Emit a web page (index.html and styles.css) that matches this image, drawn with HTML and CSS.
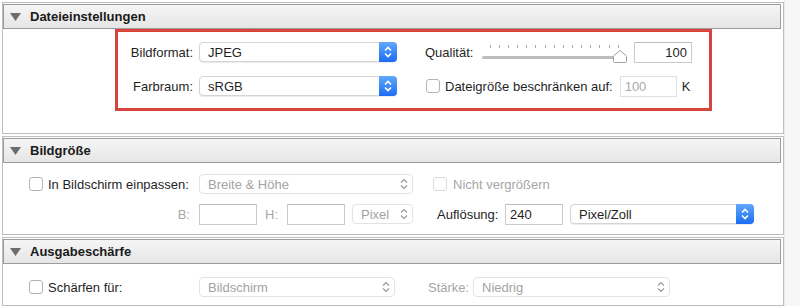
FILE: index.html
```html
<!DOCTYPE html>
<html lang="de">
<head>
<meta charset="utf-8">
<title>Export</title>
<link rel="stylesheet" href="styles.css">
</head>
<body>
<div class="panel">
  <section class="sec sec1">
    <div class="hdr"><svg class="tri" width="11" height="8" viewBox="0 0 11 8"><polygon points="0,0 11,0 5.5,8" fill="#6d6d6d"/></svg><span>Dateieinstellungen</span></div>
    <div class="body b1">
      <div class="row">
        <span class="lbl w93">Bildformat:</span>
        <div class="popup on w198"><span>JPEG</span><span class="step blue"><svg width="18" height="18" viewBox="0 0 18 18"><polyline points="6,7.5 9,4.5 12,7.5" fill="none" stroke="#fff" stroke-width="1.6"/><polyline points="6,10.5 9,13.5 12,10.5" fill="none" stroke="#fff" stroke-width="1.6"/></svg></span></div>
        <span class="txt ml28 w57">Qualität:</span>
        <svg class="slider" width="146" height="22" viewBox="0 0 146 22">
          <g stroke="#a6a6a6" stroke-width="1">
            <line x1="8.5" y1="4" x2="8.5" y2="7"/><line x1="17.5" y1="4" x2="17.5" y2="7"/><line x1="26.5" y1="4" x2="26.5" y2="7"/><line x1="35.5" y1="4" x2="35.5" y2="7"/><line x1="44.5" y1="4" x2="44.5" y2="7"/><line x1="53.5" y1="4" x2="53.5" y2="7"/><line x1="63.5" y1="4" x2="63.5" y2="7"/><line x1="72.5" y1="4" x2="72.5" y2="7"/><line x1="81.5" y1="4" x2="81.5" y2="7"/><line x1="90.5" y1="4" x2="90.5" y2="7"/><line x1="99.5" y1="4" x2="99.5" y2="7"/><line x1="108.5" y1="4" x2="108.5" y2="7"/><line x1="117.5" y1="4" x2="117.5" y2="7"/><line x1="127.5" y1="4" x2="127.5" y2="7"/><line x1="136.5" y1="4" x2="136.5" y2="7"/>
          </g>
          <rect x="0" y="15" width="142" height="3" rx="1.5" fill="#bdbdbd"/>
          <path d="M138 9.5 L144.5 15 V20.5 Q144.5 21.5 143.5 21.5 H132.5 Q131.5 21.5 131.5 20.5 V15 Z" fill="#fff" stroke="#a0a0a0" stroke-width="1"/>
        </svg>
        <div class="field w58 ml6 right">100</div>
      </div>
      <div class="row">
        <span class="lbl w93">Farbraum:</span>
        <div class="popup on w198"><span>sRGB</span><span class="step blue"><svg width="18" height="18" viewBox="0 0 18 18"><polyline points="6,7.5 9,4.5 12,7.5" fill="none" stroke="#fff" stroke-width="1.6"/><polyline points="6,10.5 9,13.5 12,10.5" fill="none" stroke="#fff" stroke-width="1.6"/></svg></span></div>
        <span class="cb ml29"></span>
        <span class="txt ml5">Dateigröße beschränken auf:</span>
        <div class="field off w57 ml7">100</div>
        <span class="txt ml5">K</span>
      </div>
    </div>
    <div class="redbox"></div>
  </section>

  <section class="sec">
    <div class="hdr"><svg class="tri" width="11" height="8" viewBox="0 0 11 8"><polygon points="0,0 11,0 5.5,8" fill="#6d6d6d"/></svg><span>Bildgröße</span></div>
    <div class="body b2">
      <div class="row pl26">
        <div class="cbgroup w170"><span class="cb"></span><span class="txt ml5">In Bildschirm einpassen:</span></div>
        <div class="popup off w214"><span>Breite &amp; Höhe</span><span class="step"><svg width="18" height="18" viewBox="0 0 18 18"><polyline points="6,7.5 9,4.5 12,7.5" fill="none" stroke="#9a9a9a" stroke-width="1.2"/><polyline points="6,10.5 9,13.5 12,10.5" fill="none" stroke="#9a9a9a" stroke-width="1.2"/></svg></span></div>
        <span class="cb dis ml20"></span>
        <span class="txt dim ml6">Nicht vergrößern</span>
      </div>
      <div class="row pl167">
        <span class="lbl dim w20">B:</span>
        <div class="field w58 ml9"></div>
        <span class="txt dim w22 ml8">H:</span>
        <div class="field w58"></div>
        <div class="popup off w61 ml7"><span>Pixel</span><span class="step"><svg width="18" height="18" viewBox="0 0 18 18"><polyline points="6,7.5 9,4.5 12,7.5" fill="none" stroke="#9a9a9a" stroke-width="1.2"/><polyline points="6,10.5 9,13.5 12,10.5" fill="none" stroke="#9a9a9a" stroke-width="1.2"/></svg></span></div>
        <span class="txt w68 ml24">Auflösung:</span>
        <div class="field w58 left">240</div>
        <div class="popup on w184 ml7"><span>Pixel/Zoll</span><span class="step blue"><svg width="18" height="18" viewBox="0 0 18 18"><polyline points="6,7.5 9,4.5 12,7.5" fill="none" stroke="#fff" stroke-width="1.6"/><polyline points="6,10.5 9,13.5 12,10.5" fill="none" stroke="#fff" stroke-width="1.6"/></svg></span></div>
      </div>
    </div>
  </section>

  <section class="sec">
    <div class="hdr"><svg class="tri" width="11" height="8" viewBox="0 0 11 8"><polygon points="0,0 11,0 5.5,8" fill="#6d6d6d"/></svg><span>Ausgabeschärfe</span></div>
    <div class="body b3">
      <div class="row pl26">
        <div class="cbgroup w170"><span class="cb"></span><span class="txt ml5">Schärfen für:</span></div>
        <div class="popup off w196"><span>Bildschirm</span><span class="step"><svg width="18" height="18" viewBox="0 0 18 18"><polyline points="6,7.5 9,4.5 12,7.5" fill="none" stroke="#9a9a9a" stroke-width="1.2"/><polyline points="6,10.5 9,13.5 12,10.5" fill="none" stroke="#9a9a9a" stroke-width="1.2"/></svg></span></div>
        <span class="txt dim w45 ml33">Stärke:</span>
        <div class="popup off w197"><span>Niedrig</span><span class="step"><svg width="18" height="18" viewBox="0 0 18 18"><polyline points="6,7.5 9,4.5 12,7.5" fill="none" stroke="#9a9a9a" stroke-width="1.2"/><polyline points="6,10.5 9,13.5 12,10.5" fill="none" stroke="#9a9a9a" stroke-width="1.2"/></svg></span></div>
      </div>
    </div>
  </section>
</div>
<div class="scroll"></div>
</body>
</html>
```

FILE: styles.css
```css
* { box-sizing: border-box; }
html, body { margin: 0; padding: 0; }
body {
  width: 800px;
  height: 306px;
  overflow: hidden;
  display: flex;
  background: #fff;
  font-family: "Liberation Sans", Arial, sans-serif;
  font-size: 13px;
  color: #1f1f1f;
}
.panel {
  width: 784px;
  padding: 2px 0 0 2px;
}
.scroll {
  width: 16px;
  background: #f7f7f7;
  border-left: 1px solid #e9e9e9;
}
.sec {
  position: relative;
  width: 782px;
  border: 1px solid #bdbdbd;
  padding-top: 1px;
  margin-bottom: 2px;
  background: #fff;
}
.hdr {
  height: 25px;
  margin-right: 2px;
  border: 1px solid #9c9c9c;
  background: linear-gradient(#f5f5f5, #e6e6e6);
  display: flex;
  align-items: center;
  font-weight: bold;
  color: #1a1a1a;
}
.tri { margin-left: 6px; margin-right: 9px; }
.b1 { height: 104px; padding-top: 12px; display: flex; flex-direction: column; gap: 12px; }
.b2 { height: 71px; padding-top: 10px; display: flex; flex-direction: column; gap: 8px; }
.b3 { height: 41px; padding-top: 12px; }
.row { display: flex; align-items: center; height: 22px; }
.b1 .row { padding-left: 97px; }
.pl26 { padding-left: 26px; }
.pl167 { padding-left: 167px; }
.lbl { text-align: right; white-space: nowrap; }
.b1 .lbl.w93 { margin-right: 6px; }
.txt { white-space: nowrap; }
.dim { color: #a6a6a6; }
.cbgroup { display: flex; align-items: center; }
.popup {
  height: 20px;
  display: flex;
  align-items: center;
  justify-content: space-between;
  padding-left: 8px;
  background: #fff;
  border-radius: 4px;
  border: 1px solid #d4d4d4;
  box-shadow: 0 1px 1px rgba(0,0,0,0.08);
}
.popup.off { color: #a3a3a3; border-color: #e3e3e3; box-shadow: none; }
.step {
  width: 18px;
  height: 20px;
  margin: -1px -1px -1px 0;
  display: flex;
  align-items: center;
  justify-content: center;
  border-radius: 0 4px 4px 0;
}
.step.blue { background: linear-gradient(#62a8fc, #1b6cf2); }
.field {
  height: 21px;
  border: 1px solid #cbcbcb;
  border-top-color: #bcbcbc;
  background: #fff;
  display: flex;
  align-items: center;
  padding: 0 4px;
}
.field.right { justify-content: flex-end; }
.field.off { color: #aaaaaa; border-color: #e0e0e0; }
.cb {
  width: 14px;
  height: 14px;
  border: 1px solid #b3b3b3;
  border-radius: 3px;
  background: #fff;
  flex: none;
}
.cb.dis { border-color: #dadada; }
.redbox {
  position: absolute;
  left: 112px;
  top: 26px;
  width: 597px;
  height: 82px;
  border: 3px solid #d8443c;
  pointer-events: none;
}
.w20 { width: 20px; }
.w22 { width: 22px; }
.w45 { width: 45px; }
.w57 { width: 57px; }
.w58 { width: 58px; }
.w61 { width: 61px; }
.w68 { width: 68px; }
.w93 { width: 93px; }
.w170 { width: 170px; }
.w184 { width: 184px; }
.w196 { width: 196px; }
.w197 { width: 197px; }
.w198 { width: 198px; }
.w214 { width: 214px; }
.ml5 { margin-left: 5px; }
.ml6 { margin-left: 6px; }
.ml7 { margin-left: 7px; }
.ml8 { margin-left: 8px; }
.ml9 { margin-left: 9px; }
.ml20 { margin-left: 20px; }
.ml24 { margin-left: 24px; }
.ml28 { margin-left: 28px; }
.ml29 { margin-left: 29px; }
.ml33 { margin-left: 33px; }
.slider { flex: none; }
```
